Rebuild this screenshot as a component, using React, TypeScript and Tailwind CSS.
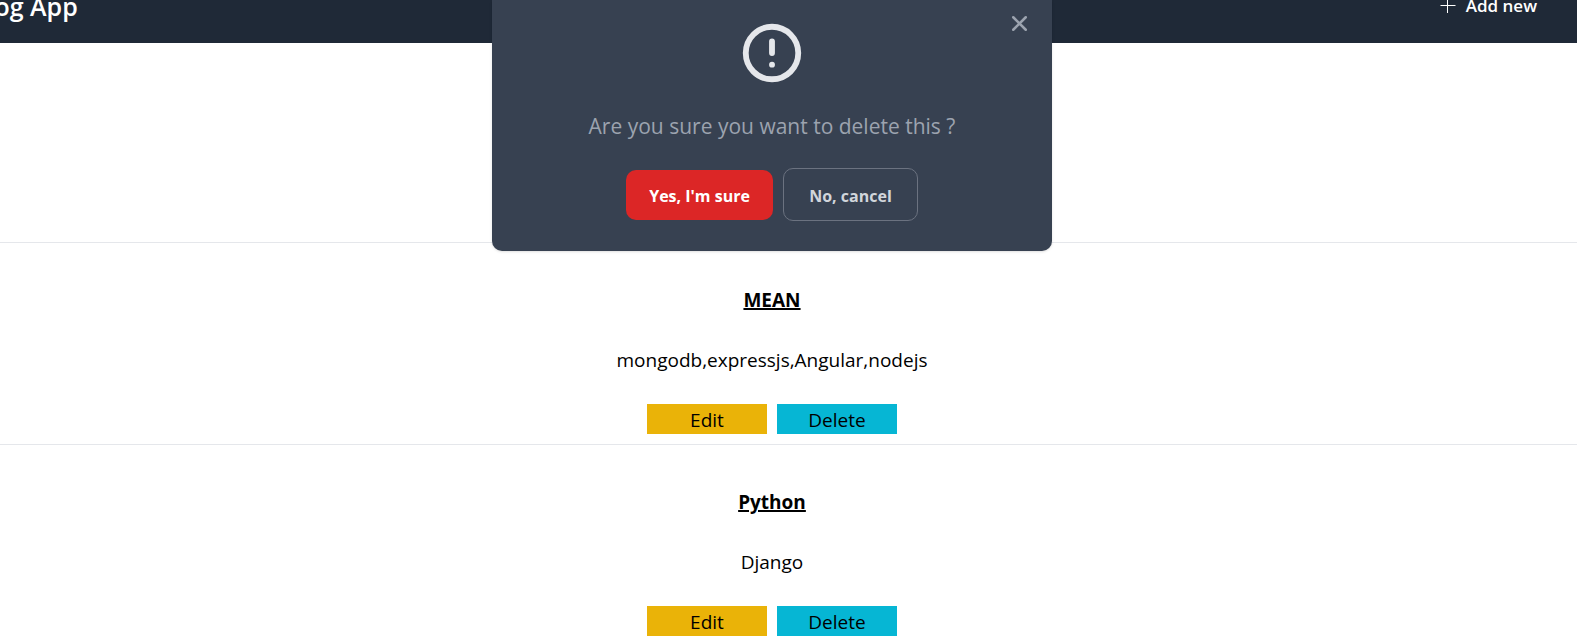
import React from "react";

type Post = { title: string; body: string };

const posts: Post[] = [
  { title: "MEAN", body: "mongodb,expressjs,Angular,nodejs" },
  { title: "Python", body: "Django" },
];

function Header() {
  return (
    <header className="flex items-start justify-between bg-[#1f2937] pr-10 pb-[19px] pl-1 text-white">
      <a href="#home" className="-mt-3 text-[25px] leading-9 font-semibold">
        Blog App
      </a>
      <a href="#new" className="-mt-2 flex items-center gap-2 text-[17px] leading-7 font-semibold">
        <svg className="size-5" viewBox="0 0 20 20" fill="none" stroke="currentColor" aria-hidden="true">
          <path d="M2.5 9.5h15M9.5 2v15" />
        </svg>
        Add new
      </a>
    </header>
  );
}

function PostRow({ title, body }: Post) {
  return (
    <article className="flex flex-col items-center border-t border-gray-200 pt-[42px] pb-[10px]">
      <h2 className="mb-[30px] text-[19px] leading-[30px] font-bold underline decoration-2">{title}</h2>
      <p className="mb-[29px] text-[19px] leading-[30px]">{body}</p>
      <div className="flex gap-[10px] text-[19px] leading-7">
        <button type="button" className="w-[120px] bg-[#eab308] pt-0.5">Edit</button>
        <button type="button" className="w-[120px] bg-[#06b6d4] pt-0.5">Delete</button>
      </div>
    </article>
  );
}

function DeleteDialog() {
  return (
    <div className="absolute inset-x-0 top-0 flex justify-center">
      <div
        role="dialog"
        aria-labelledby="delete-question"
        className="relative flex w-full max-w-[560px] flex-col items-center rounded-b-[10px] bg-[#374151] px-[30px] pt-[18px] pb-[30px] shadow-sm"
      >
        <button type="button" aria-label="Close" className="absolute top-[11px] right-5 text-[#9ca3af]">
          <svg className="size-[25px]" viewBox="0 0 20 20" fill="none" stroke="currentColor" strokeWidth="2" strokeLinecap="round">
            <path d="M5 5l10 10M15 5L5 15" />
          </svg>
        </button>
        <svg
          className="mb-5 size-[70px] text-[#e5e7eb]"
          viewBox="0 0 24 24"
          fill="none"
          stroke="currentColor"
          strokeWidth="2"
          strokeLinecap="round"
          aria-hidden="true"
        >
          <path d="M12 8v4m0 4h.01M21 12a9 9 0 11-18 0 9 9 0 0118 0z" />
        </svg>
        <h3 id="delete-question" className="mb-6 text-[21px] leading-9 text-[#9ca3af]">
          Are you sure you want to delete this ?
        </h3>
        <div className="flex items-center gap-[10px] text-base font-bold">
          <button type="button" className="h-[50px] w-[147px] rounded-[10px] bg-[#dc2626] pt-0.5 text-white">
            Yes, I'm sure
          </button>
          <button type="button" className="h-[53px] w-[135px] rounded-[10px] border border-[#6b7280] pt-0.5 text-[#d1d5db]">
            No, cancel
          </button>
        </div>
      </div>
    </div>
  );
}

export default function App() {
  return (
    <div className="overflow-hidden bg-white font-['Open_Sans','Noto_Sans',sans-serif] text-black">
      <div className="relative -ml-[33px] flow-root">
        <Header />
        <main className="pt-[199px]">
          {posts.map((post) => (
            <PostRow key={post.title} {...post} />
          ))}
        </main>
        <DeleteDialog />
      </div>
    </div>
  );
}
